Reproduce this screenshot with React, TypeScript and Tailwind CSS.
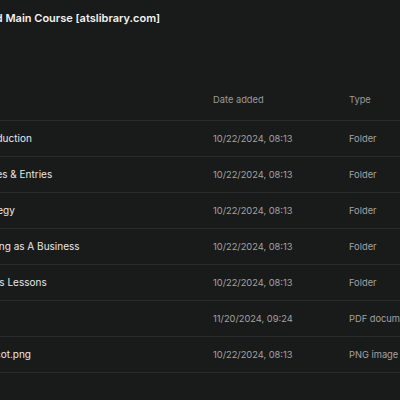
import React from "react";

const rows = [
  { name: "Introduction", date: "10/22/2024, 08:13", type: "Folder" },
  { name: "Trades & Entries", date: "10/22/2024, 08:13", type: "Folder" },
  { name: "Strategy", date: "10/22/2024, 08:13", type: "Folder" },
  { name: "Trading as A Business", date: "10/22/2024, 08:13", type: "Folder" },
  { name: "Bonus Lessons", date: "10/22/2024, 08:13", type: "Folder" },
  { name: "a.pdf", date: "11/20/2024, 09:24", type: "PDF document" },
  { name: "Mascot.png", date: "10/22/2024, 08:13", type: "PNG image" },
];

export default function App() {
  return (
    <div
      className="w-[400px] h-[400px] overflow-hidden bg-[#191a1a]"
      style={{ fontFamily: "Inter, 'Noto Sans', sans-serif" }}
    >
      <div className="ml-[-25px] w-[640px]">
        <div className="h-[36px] pl-[3px] flex items-center text-[11px] font-semibold text-[#f2f2f2] whitespace-nowrap">
          Gold Main Course [atslibrary.com]
        </div>
        <div className="h-[84px] grid grid-cols-[238px_136px_266px] items-end pb-[14px] text-[9.3px] leading-[12px] text-[#9b9b9b]">
          <div></div>
          <div>Date added</div>
          <div>Type</div>
        </div>
        {rows.map((r, i) => (
          <div
            key={i}
            className="h-[36px] grid grid-cols-[238px_136px_266px] items-center border-t border-[#2a2b2b] whitespace-nowrap"
          >
            <div className="text-[10px] text-[#e8e8e8]">{r.name}</div>
            <div className="text-[9.3px] text-[#a3a3a3]">{r.date}</div>
            <div className="text-[9.3px] text-[#a3a3a3]">{r.type}</div>
          </div>
        ))}
        <div className="border-t border-[#2a2b2b]" />
      </div>
    </div>
  );
}
